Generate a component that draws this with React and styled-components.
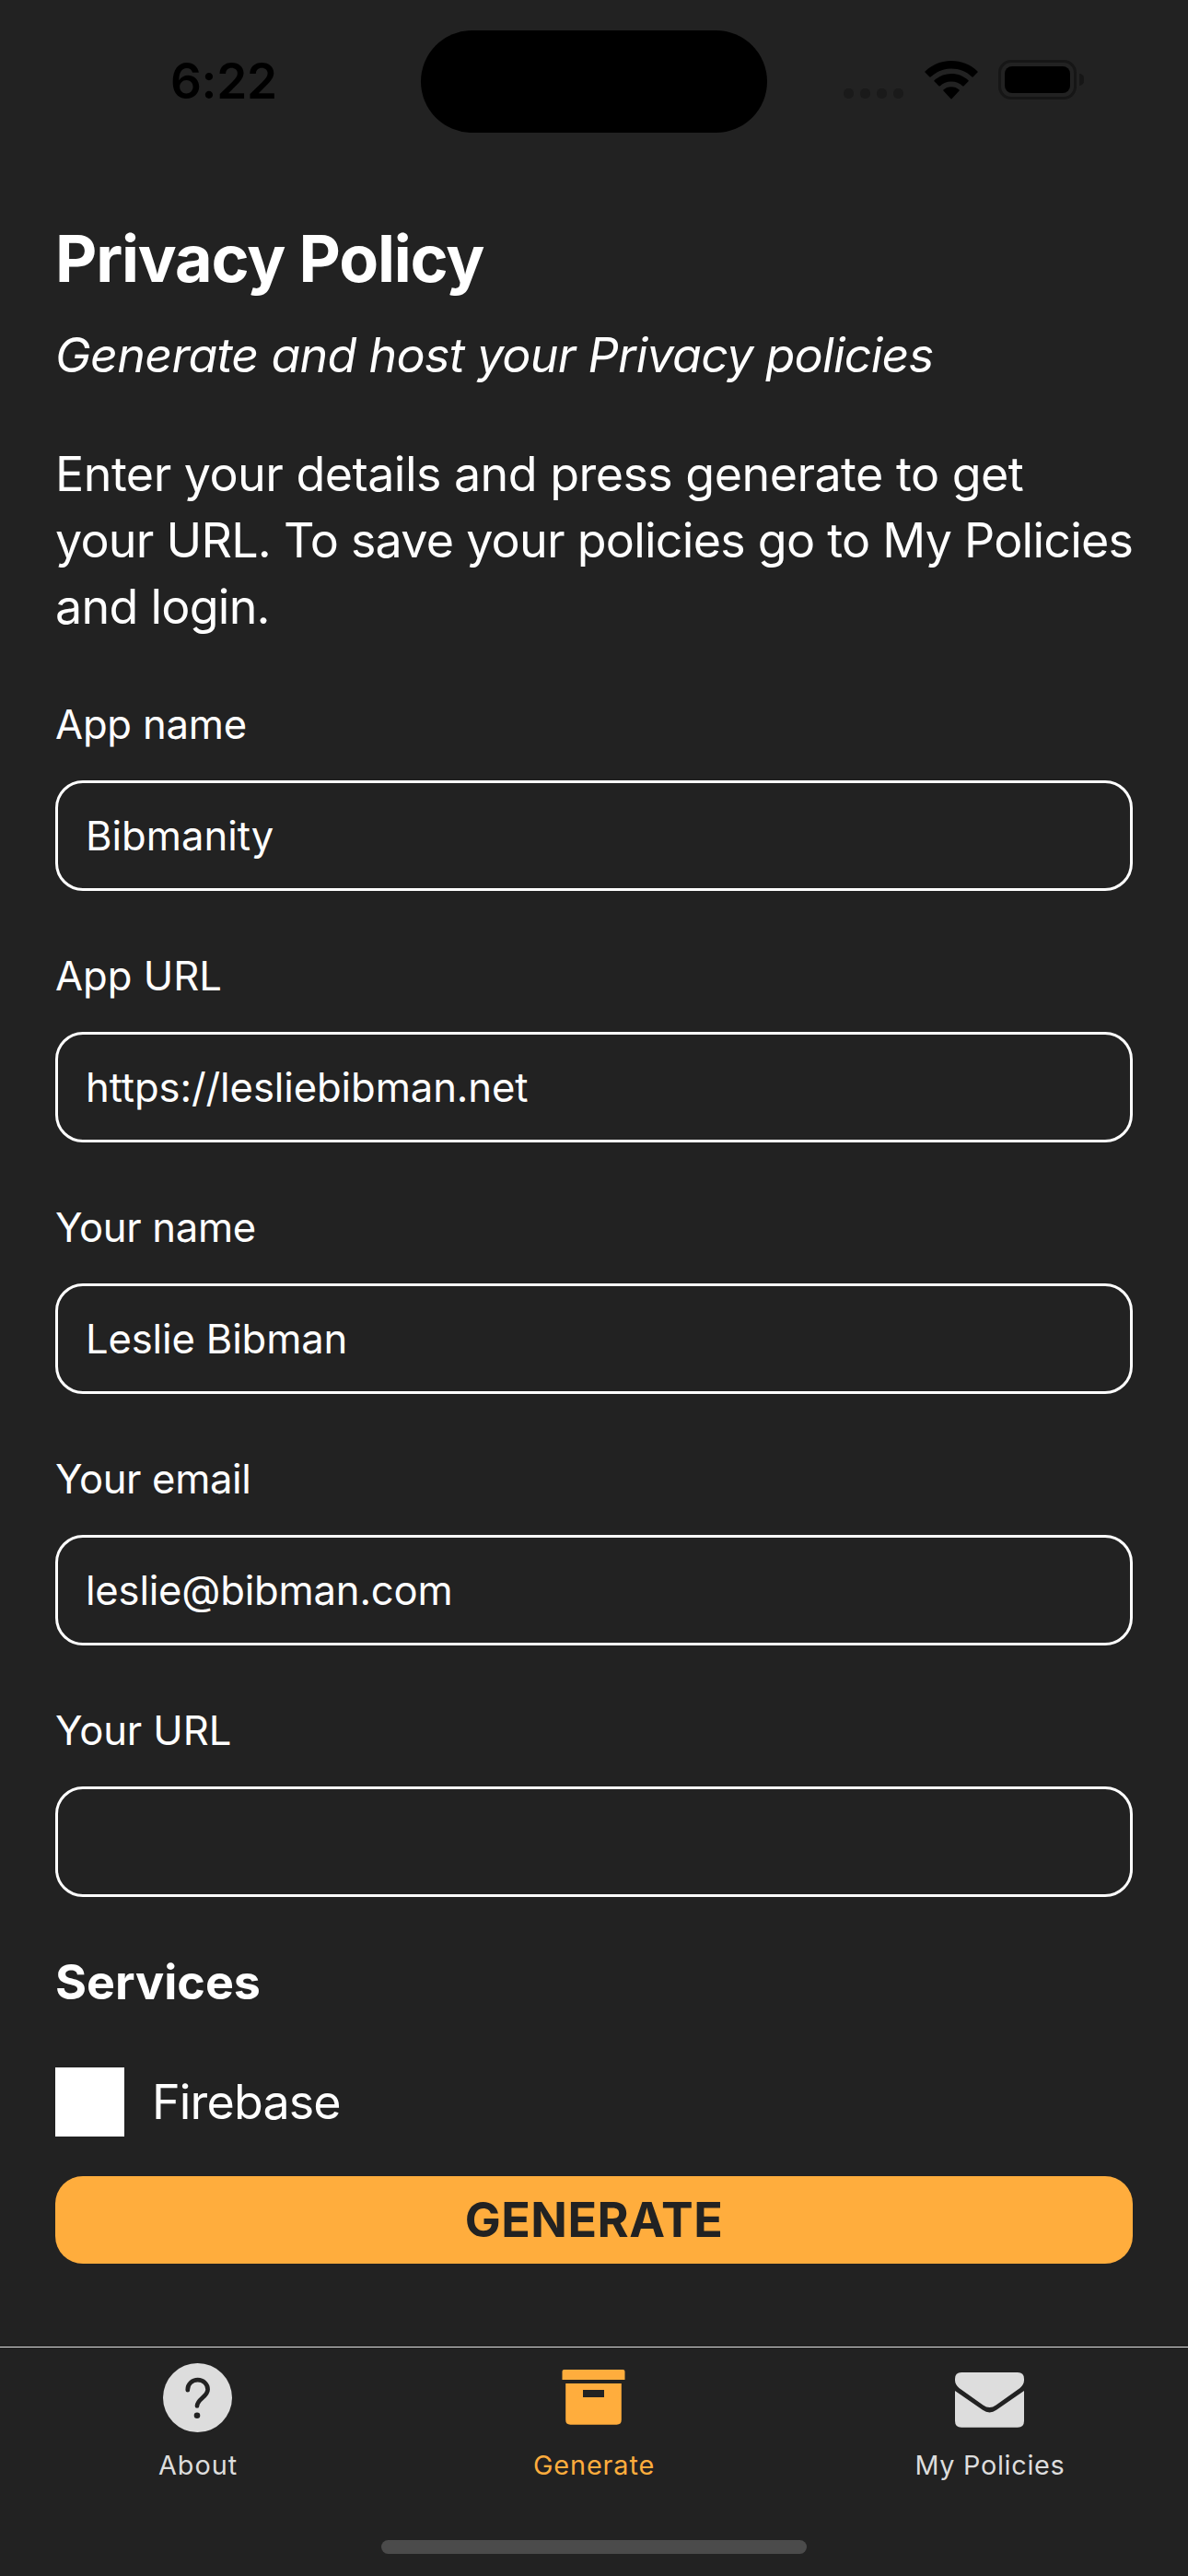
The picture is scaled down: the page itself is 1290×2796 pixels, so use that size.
import React from "react";
import styled, { createGlobalStyle } from "styled-components";

const GlobalStyle = createGlobalStyle`
  *, *::before, *::after { box-sizing: border-box; }
  html, body { margin: 0; padding: 0; background: #222222; }
  body {
    font-family: Inter, "Liberation Sans", sans-serif;
    color: #ffffff;
    -webkit-font-smoothing: antialiased;
  }
`;

const Screen = styled.div`
  display: flex;
  flex-direction: column;
  width: 1290px;
  height: 2796px;
  overflow: hidden;
  background: #222222;
`;

const StatusBar = styled.header`
  display: grid;
  grid-template-columns: 457px 376px 1fr;
  height: 177px;
  padding-top: 33px;
  flex: none;
  color: #000000;
`;

const Time = styled.div`
  height: 111px;
  padding-left: 185px;
  font-size: 53px;
  font-weight: 600;
  line-height: 110px;
  letter-spacing: ${(p) => p.$track}px;
`;

const Island = styled.div`
  height: 111px;
  border-radius: 56px;
  background: #000000;
`;

const StatusIcons = styled.div`
  display: flex;
  align-items: flex-end;
  height: 75px;
  padding-left: 83px;
`;

const Signal = styled.div`
  display: flex;
  gap: 7px;
  width: 88px;
  padding-bottom: 1px;
`;

const SignalDot = styled.span`
  width: 11px;
  height: 11px;
  border-radius: 5px;
  background: #1a1a1a;
`;

const Battery = styled.div`
  display: flex;
  align-items: center;
  gap: 3px;
  margin-left: 22px;
`;

const BatteryShell = styled.div`
  width: 85px;
  height: 43px;
  padding: 4px;
  border: 3px solid #161616;
  border-radius: 14px;
`;

const BatteryFill = styled.div`
  height: 100%;
  border-radius: 8px;
  background: #000000;
`;

const BatteryNub = styled.div`
  width: 5px;
  height: 13px;
  border-radius: 0 5px 5px 0;
  background: #161616;
`;

const Content = styled.main`
  display: flex;
  flex-direction: column;
  padding: 59px 60px 0;
`;

const Title = styled.h1`
  margin: 0;
  font-size: 70px;
  font-weight: 700;
  line-height: 90px;
  letter-spacing: ${(p) => p.$track}px;
`;

const Subtitle = styled.p`
  margin: 24px 0 0;
  font-size: 52px;
  font-style: italic;
  line-height: 72px;
  letter-spacing: ${(p) => p.$track}px;
  white-space: nowrap;
`;

const Intro = styled.p`
  margin: 57px 0 0;
  font-size: 52px;
  line-height: 72px;
`;

const IntroLine = styled.span`
  display: block;
  white-space: nowrap;
  letter-spacing: ${(p) => p.$track}px;
`;

const Form = styled.form`
  display: flex;
  flex-direction: column;
  gap: 66px;
  margin-top: 65px;
`;

const Field = styled.label`
  display: flex;
  flex-direction: column;
  gap: 33px;
`;

const FieldLabel = styled.span`
  font-size: 43.6px;
  line-height: 54px;
  letter-spacing: ${(p) => p.$track}px;
`;

const TextInput = styled.input`
  width: 100%;
  height: 120px;
  padding: 0 30px;
  border: 3px solid #ffffff;
  border-radius: 30px;
  outline: none;
  background: transparent;
  color: inherit;
  font: inherit;
  font-size: 43.6px;
  letter-spacing: ${(p) => p.$track}px;
`;

const SectionTitle = styled.h2`
  margin: 57px 0 0;
  font-size: 52px;
  font-weight: 700;
  line-height: 72px;
  letter-spacing: ${(p) => p.$track}px;
`;

const ServiceRow = styled.div`
  display: flex;
  align-items: center;
  gap: 30px;
  height: 75px;
  margin-top: 56px;
`;

const Checkbox = styled.span`
  width: 75px;
  height: 75px;
  background: #ffffff;
`;

const ServiceName = styled.span`
  font-size: 52px;
  line-height: 75px;
  letter-spacing: ${(p) => p.$track}px;
`;

const GenerateButton = styled.button`
  height: 95px;
  margin-top: 43px;
  padding: 0;
  border: 0;
  border-radius: 30px;
  background: #ffad3d;
  color: #222222;
  font: inherit;
  font-size: 52px;
  font-weight: 700;
  line-height: 96px;
  letter-spacing: ${(p) => p.$track}px;
`;

const TabBar = styled.nav`
  display: grid;
  grid-template-columns: repeat(3, 1fr);
  grid-template-rows: 209px auto;
  height: 249px;
  margin-top: auto;
  border-top: 1px solid #dddddd;
  flex: none;
`;

const Tab = styled.a`
  display: flex;
  flex-direction: column;
  align-items: center;
  padding-top: 17px;
  color: ${(p) => (p.$active ? "#ffad3d" : "#dddddd")};
`;

const TabIcon = styled.svg`
  width: 75px;
  height: 75px;
  margin-right: 1px;
`;

const TabLabel = styled.span`
  margin-top: 16px;
  font-size: 28.8px;
  line-height: 40px;
  letter-spacing: ${(p) => p.$track}px;
`;

const HomeIndicator = styled.div`
  grid-column: 1 / -1;
  justify-self: center;
  width: 462px;
  height: 15px;
  border-radius: 8px;
  background: #4b4b4b;
`;

const WifiIcon = () => (
  <svg width="58" height="42" viewBox="0 0 58 42">
    <path d="M29 0C40 0 50 4 57.500 11.500Q58 12 57.500 12.600L52.500 17.600Q52 18 51.500 17.500C45.500 11.800 37.500 8.600 29 8.600S12.500 11.800 6.500 17.500Q6 18 5.500 17.600L.5 12.600Q0 12 .5 11.500C8 4 18 0 29 0Z" />
    <path d="M29 14C36 14 42.500 16.600 47.500 21.200Q48 21.800 47.500 22.300L42.400 27.400Q41.900 27.800 41.400 27.400C38 24.300 33.700 22.600 29 22.600S20 24.300 16.600 27.400Q16.100 27.800 15.600 27.400L10.500 22.300Q10 21.800 10.500 21.200C15.500 16.600 22 14 29 14Z" />
    <path d="M29 28.300C32.400 28.300 35.400 29.500 37.600 31.600Q38.100 32.100 37.600 32.600L29.500 41.300Q29 41.800 28.500 41.300L20.400 32.600Q19.900 32.100 20.400 31.600C22.600 29.500 25.600 28.300 29 28.300Z" />
  </svg>
);

const AboutIcon = () => (
  <TabIcon viewBox="0 0 75 75">
    <circle cx="37.500" cy="37.500" r="37.500" fill="currentColor" />
    <path
      d="M26.800 29.200V28.500A10.900 10.400 0 0 1 48.600 28.500C48.600 36.500 37 39 37 46.500"
      fill="none"
      stroke="#222222"
      strokeWidth="4.700"
      strokeLinecap="round"
    />
    <circle cx="37" cy="56.700" r="3.300" fill="#222222" />
  </TabIcon>
);

const ArchiveIcon = () => (
  <TabIcon viewBox="0 0 75 75" fill="currentColor">
    <path d="M5.500 7H69.500Q71.500 7 71.500 9V18H3.500V9Q3.500 7 5.500 7Z" />
    <path
      fillRule="evenodd"
      d="M7.200 22H67.800V61.500Q67.800 66.700 62.600 66.700H12.400Q7.200 66.700 7.200 61.500ZM26 29V37H49V29Z"
    />
  </TabIcon>
);

const MailIcon = () => (
  <TabIcon viewBox="0 0 75 75" fill="currentColor">
    <path d="M7 10H68Q75 10 75 17V18.500Q75 23 70.500 27L44.500 45.500Q37.500 50.500 30.500 45.500L4.500 27Q0 23 0 18.500V17Q0 10 7 10Z" />
    <path d="M0 30L30 50.800Q37.500 56 45 50.800L75 30V62.700Q75 69.700 68 69.700H7Q0 69.700 0 62.700Z" />
  </TabIcon>
);

const fields = [
  { label: "App name", labelTrack: -0.2, value: "Bibmanity", track: 0 },
  { label: "App URL", labelTrack: 0, value: "https://lesliebibman.net", track: -0.1 },
  { label: "Your name", labelTrack: -0.3, value: "Leslie Bibman", track: -0.15 },
  { label: "Your email", labelTrack: -0.35, value: "leslie@bibman.com", track: -0.2 },
  { label: "Your URL", labelTrack: -0.1, value: "", track: 0 },
];

const tabs = [
  { label: "About", Icon: AboutIcon, track: 1 },
  { label: "Generate", Icon: ArchiveIcon, track: 0.9, active: true },
  { label: "My Policies", Icon: MailIcon, track: 0.7 },
];

export default function App() {
  return (
    <Screen>
      <GlobalStyle />
      <StatusBar>
        <Time $track={-0.3}>6:22</Time>
        <Island />
        <StatusIcons>
          <Signal>
            <SignalDot />
            <SignalDot />
            <SignalDot />
            <SignalDot />
          </Signal>
          <WifiIcon />
          <Battery>
            <BatteryShell>
              <BatteryFill />
            </BatteryShell>
            <BatteryNub />
          </Battery>
        </StatusIcons>
      </StatusBar>
      <Content>
        <Title $track={-1.17}>Privacy Policy</Title>
        <Subtitle $track={-0.75}>Generate and host your Privacy policies</Subtitle>
        <Intro>
          <IntroLine $track={-0.54}>Enter your details and press generate to get</IntroLine>
          <IntroLine $track={-0.76}>your URL. To save your policies go to My Policies</IntroLine>
          <IntroLine $track={-0.75}>and login.</IntroLine>
        </Intro>
        <Form>
          {fields.map((f) => (
            <Field key={f.label}>
              <FieldLabel $track={f.labelTrack}>{f.label}</FieldLabel>
              <TextInput $track={f.track} defaultValue={f.value} />
            </Field>
          ))}
        </Form>
        <SectionTitle $track={0}>Services</SectionTitle>
        <ServiceRow>
          <Checkbox />
          <ServiceName $track={-0.85}>Firebase</ServiceName>
        </ServiceRow>
        <GenerateButton $track={0.5}>GENERATE</GenerateButton>
      </Content>
      <TabBar>
        {tabs.map(({ label, Icon, track, active }) => (
          <Tab key={label} $active={active}>
            <Icon />
            <TabLabel $track={track}>{label}</TabLabel>
          </Tab>
        ))}
        <HomeIndicator />
      </TabBar>
    </Screen>
  );
}
